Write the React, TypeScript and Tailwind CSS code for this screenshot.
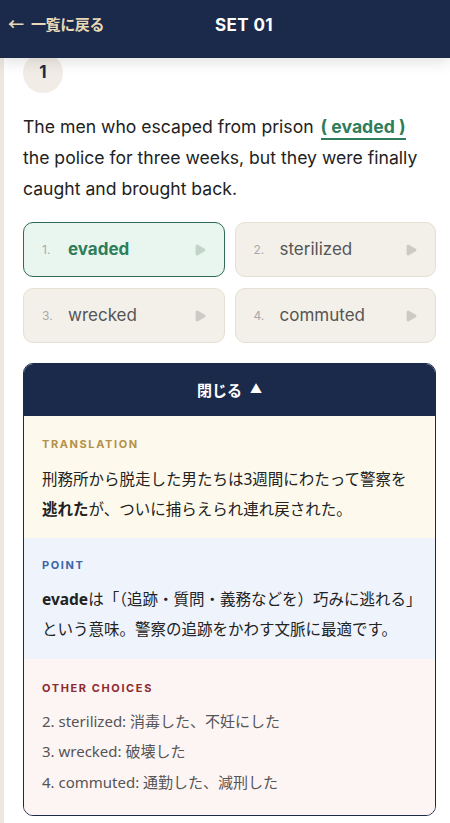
import { Play } from "lucide-react";

const choices = [
  { no: 1, word: "evaded", correct: true },
  { no: 2, word: "sterilized", correct: false },
  { no: 3, word: "wrecked", correct: false },
  { no: 4, word: "commuted", correct: false },
];

const jp = { fontFamily: '"Noto Sans", "Noto Sans CJK JP", sans-serif' };
const inter = { fontFamily: 'Inter, "Noto Sans CJK JP", sans-serif' };

export default function App() {
  return (
    <div className="min-h-[823px] bg-white" style={inter}>
      <header className="relative z-10 flex h-[58px] items-start bg-[#1b2a4a] px-2 pt-[13px] shadow-[0_4px_14px_rgba(0,0,0,0.12)]">
        <a className="flex shrink-0 items-center gap-[7px] text-[15px] font-bold text-[#e8dab6]" style={jp}>
          <span className="text-[16px] leading-none">←</span>
          <span className="tracking-[-0.4px]">一覧に戻る</span>
        </a>
        <h1 className="mr-[58px] flex-1 text-center text-[17px] font-bold tracking-[0.4px] text-white">SET 01</h1>
      </header>

      <main className="-mt-[5px] border-l-4 border-[#ece8df] pb-2 pl-[19px] pr-[14px]">
        <div className="flex h-10 w-10 items-center justify-center rounded-full bg-[#f1ede6] text-[17px] font-bold text-[#1b2a4a]">
          1
        </div>

        <p className="mt-[18px] text-[17.6px] leading-[31px] text-[#222]">
          The men who escaped from prison{" "}
          <span className="mx-[2px] border-b-2 border-[#2e7d5b] pb-[1px] font-bold text-[#2e7d5b]">( evaded )</span>{" "}
          the police for three weeks, but they were finally caught and brought back.
        </p>

        <div className="mt-[18px] grid grid-cols-2 gap-x-[10px] gap-y-[11px]">
          {choices.map((c) => (
            <div
              key={c.no}
              className={`flex h-[55px] items-center rounded-[10px] border pl-[18px] pr-[17px] ${
                c.correct ? "border-[#2f6b52] bg-[#e9f6ef]" : "border-[#e6e0d4] bg-[#f3f0e9]"
              }`}
            >
              <span className="w-[26px] text-[12px] text-[#a9a9a9]">{c.no}.</span>
              <span className={`flex-1 text-[17px] ${c.correct ? "font-bold text-[#2e7d5b]" : "text-[#555]"}`}>{c.word}</span>
              <Play
                className={`h-[14px] w-[14px] ${c.correct ? "fill-[#c2d3c9] text-[#c2d3c9]" : "fill-[#cdcac4] text-[#cdcac4]"}`}
                strokeWidth={1}
              />
            </div>
          ))}
        </div>

        <section className="mt-5 overflow-hidden rounded-[10px] border border-[#1b2a4a]">
          <button className="flex h-[52px] w-full items-center justify-center gap-[8px] bg-[#1b2a4a] text-[15px] font-bold text-white" style={jp}>
            閉じる <span className="text-[12px]">▲</span>
          </button>

          <div className="bg-[#fdf9ec] px-[18px] pb-[14px] pt-[20px]">
            <p className="text-[11px] font-bold tracking-[1.6px] text-[#b3914a]">TRANSLATION</p>
            <p className="mt-[11px] text-[15.5px] leading-[30px] text-[#222]" style={jp}>
              刑務所から脱走した男たちは3週間にわたって警察を<b>逃れた</b>が、ついに捕らえられ連れ戻された。
            </p>
          </div>

          <div className="bg-[#eef3fc] px-[18px] pb-[15px] pt-[19px]">
            <p className="text-[11px] font-bold tracking-[1.6px] text-[#3b65a6]">POINT</p>
            <p className="mt-[11px] text-[15.5px] leading-[30px] text-[#222]" style={jp}>
              <b>evade</b>は「（追跡・質問・義務などを）巧みに逃れる」という意味。警察の追跡をかわす文脈に最適です。
            </p>
          </div>

          <div className="bg-[#fdf4f4] px-[18px] pb-[18px] pt-[21px]">
            <p className="text-[11px] font-bold tracking-[1.6px] text-[#8e2b2f]">OTHER CHOICES</p>
            <ul className="mt-[9px] text-[15px] leading-[30.5px] text-[#555]" style={jp}>
              <li>2. sterilized: 消毒した、不妊にした</li>
              <li>3. wrecked: 破壊した</li>
              <li>4. commuted: 通勤した、減刑した</li>
            </ul>
          </div>
        </section>
      </main>
    </div>
  );
}
